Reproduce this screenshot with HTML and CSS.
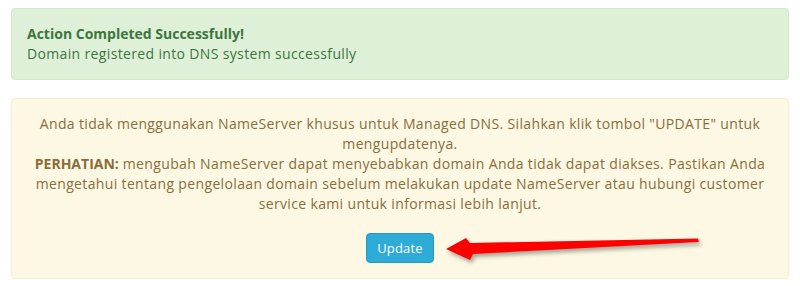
FILE: index.html
```html
<!DOCTYPE html>
<html lang="en">
<head>
    <meta charset="UTF-8">
    <title>Managed DNS</title>
    <link rel="stylesheet" href="styles.css">
</head>
<body>
    <div class="page">
        <div class="alert alert-success">
            <strong>Action Completed Successfully!</strong><br>
            Domain registered into DNS system successfully
        </div>

        <div class="alert alert-warning">
            <p>Anda tidak menggunakan NameServer khusus untuk Managed DNS. Silahkan klik tombol "UPDATE" untuk mengupdatenya.<br>
            <strong>PERHATIAN:</strong> mengubah NameServer dapat menyebabkan domain Anda tidak dapat diakses. Pastikan Anda mengetahui tentang pengelolaan domain sebelum melakukan update NameServer atau hubungi customer service kami untuk informasi lebih lanjut.</p>
            <button class="btn btn-info" type="button">Update</button>
        </div>

        <!-- annotation arrow pointing at the button -->
        <svg class="arrow" width="800" height="286" viewBox="0 0 800 286">
            <polygon points="446,249 466,238 470,243 698,238.5 699,242 473,254 470,260" fill="#ff0000"/>
        </svg>
    </div>
</body>
</html>
```

FILE: styles.css
```css
body {
    margin: 0;
    font-family: "Open Sans", "Liberation Sans", sans-serif;
    font-size: 14px;
    line-height: 20px;
    letter-spacing: 0.35px;
    background: #fff;
    overflow: hidden;
}
strong {
    letter-spacing: 0;
}
.page {
    position: relative;
    padding: 8px 11px 0;
}
.alert {
    padding: 15px;
    border: 1px solid transparent;
    border-radius: 4px;
    margin-bottom: 18px;
}
.alert:last-of-type {
    margin-bottom: 0;
}
.alert-success {
    background: #dff0d8;
    border-color: #d6e9c6;
    color: #3c763d;
}
.alert-warning {
    background: #fcf8e3;
    border-color: #faebcc;
    color: #8a6d3b;
    text-align: center;
    display: flex;
    flex-direction: column;
    align-items: center;
}
.alert-warning p {
    margin: 0 0 19px;
}
.btn {
    font-family: inherit;
    font-size: 13px;
    line-height: 20px;
    letter-spacing: 0.2px;
    padding: 4px 10px;
    border-radius: 4px;
    border: 1px solid #269abc;
    cursor: pointer;
}
.btn-info {
    background: #2eabd6;
    color: #fff;
}
.arrow {
    position: absolute;
    left: 0;
    top: 0;
    pointer-events: none;
    filter: drop-shadow(2px 3px 2px rgba(0,0,0,0.35));
}
```
